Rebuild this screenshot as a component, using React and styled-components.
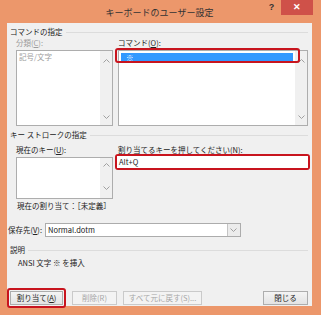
import React from 'react';
import styled, { createGlobalStyle } from 'styled-components';

const GlobalStyle = createGlobalStyle`
  html, body {
    margin: 0;
    padding: 0;
    background: #d9d9d9;
  }
  body {
    font-family: "Noto Sans CJK JP", "Noto Sans", sans-serif;
    font-size: 7.5px;
    color: #222;
  }
`;

const Window = styled.div`
  box-sizing: border-box;
  width: 321px;
  height: 315px;
  background: #ec976b;
  display: flex;
  flex-direction: column;
  padding: 0 9px 9px 7px;
`;

const TitleBar = styled.div`
  height: 23px;
  display: grid;
  grid-template-columns: 1fr auto 1fr;
  align-items: start;
`;

const Title = styled.div`
  grid-column: 2;
  font-size: 9px;
  line-height: 10px;
  margin-top: 8px;
  color: #333;
`;

const Controls = styled.div`
  grid-column: 3;
  justify-self: end;
  display: flex;
  margin-right: -1px;
`;

const Help = styled.div`
  width: 19px;
  height: 15px;
  font: bold 9px/15px "Liberation Sans", sans-serif;
  color: #333;
  text-align: center;
`;

const Close = styled.div`
  width: 32px;
  height: 15px;
  background: #cf5149;
  color: #fff;
  font: bold 9px/15px "Liberation Sans", sans-serif;
  text-align: center;
`;

const Content = styled.div`
  flex: 1;
  background: #f0f0f0;
  display: flex;
  flex-direction: column;
  padding: 0 4px 1px 1px;
`;

const GroupHeader = styled.div`
  display: flex;
  align-items: center;
  gap: 3px;
  height: 10px;
  line-height: 10px;
  margin: ${p => p.$top}px 0 0 2px;
  &::after {
    content: '';
    flex: 1;
    height: 1px;
    background: #dcdcdc;
  }
`;

const Columns = styled.div`
  display: grid;
  grid-template-columns: 97px 190px;
  column-gap: 5px;
  margin: ${p => p.$top}px 0 0 8px;
`;

const Label = styled.div`
  height: 10px;
  line-height: 10px;
  white-space: nowrap;
  color: ${p => (p.$dim ? '#9c9c9c' : '#222')};
  u {
    text-underline-offset: 1px;
  }
`;

const ListBox = styled.div`
  position: relative;
  box-sizing: border-box;
  height: ${p => p.$h}px;
  border: 1px solid #adadad;
  background: #fff;
  display: flex;
`;

const ListItems = styled.div`
  flex: 1;
  padding: 1px 2px;
  line-height: 10px;
  color: ${p => (p.$dim ? '#9c9c9c' : '#222')};
`;

const SelectedRow = styled.div`
  background: #3399ff;
  color: #fff;
  height: 9px;
  line-height: 9px;
  padding-left: 5px;
  margin-top: 1px;
`;

const ScrollBar = styled.div`
  width: 12px;
  background: #f0f0f0;
  display: flex;
  flex-direction: column;
  justify-content: space-between;
  align-items: center;
  padding: ${p => p.$pad};
`;

const RowMark = styled.div`
  position: absolute;
  left: -4px;
  top: -3px;
  width: 185px;
  height: 15px;
  box-sizing: border-box;
  border: 2px solid #c8141e;
  border-radius: 3px;
`;

const RedFrame = styled.div`
  border: 2px solid #c8141e;
  border-radius: 3px;
  margin: ${p => p.$margin};
  padding: ${p => p.$pad || 0};
`;

const KeyInput = styled.div`
  height: 12px;
  background: #fff;
  line-height: 12px;
  padding-left: 2px;
  color: #222;
`;

const Line = styled.div`
  height: 10px;
  line-height: 10px;
  margin: ${p => p.$top}px 0 0 ${p => p.$left}px;
  white-space: nowrap;
`;

const SaveRow = styled.div`
  display: flex;
  align-items: center;
  margin-top: 12px;
  gap: 3px;
`;

const Select = styled.div`
  box-sizing: border-box;
  width: 196px;
  height: 14px;
  border: 1px solid #acacac;
  background: #fff;
  display: flex;
`;

const SelectValue = styled.div`
  flex: 1;
  line-height: 12px;
  padding-left: 2px;
`;

const SelectArrow = styled.div`
  width: 12px;
  border-left: 1px solid #c4c4c4;
  background: #ececec;
  display: flex;
  align-items: center;
  justify-content: center;
`;

const ButtonRow = styled.div`
  margin-top: auto;
  display: flex;
  align-items: center;
  padding-left: 2px;
`;

const Button = styled.button`
  box-sizing: border-box;
  width: ${p => p.$w}px;
  height: 14px;
  margin-left: ${p => p.$gap || 0}px;
  padding: 0;
  font-family: inherit;
  font-size: 7.5px;
  line-height: 12px;
  color: ${p => (p.disabled ? '#a6a6a6' : '#222')};
  border: 1px solid ${p => (p.disabled ? '#cacaca' : '#adadad')};
  background: ${p => (p.disabled ? '#f3f3f3' : 'linear-gradient(#f4f4f4, #e3e3e3)')};
`;

const Spacer = styled.div`
  flex: 1;
`;

const Chevron = ({ up }) => (
  <svg width="7" height="4" viewBox="0 0 7 4">
    <polyline
      points={up ? '0.5,3.5 3.5,0.5 6.5,3.5' : '0.5,0.5 3.5,3.5 6.5,0.5'}
      fill="none"
      stroke="#a0a0a0"
      strokeWidth="1"
    />
  </svg>
);

const Bar = ({ pad }) => (
  <ScrollBar $pad={pad}>
    <Chevron up />
    <Chevron />
  </ScrollBar>
);

export default function App() {
  return (
    <>
      <GlobalStyle />
      <Window>
        <TitleBar>
          <Title>キーボードのユーザー設定</Title>
          <Controls>
            <Help>?</Help>
            <Close>✕</Close>
          </Controls>
        </TitleBar>
        <Content>
          <GroupHeader $top={4}>コマンドの指定</GroupHeader>
          <Columns $top={1}>
            <Label $dim>分類(<u>C</u>):</Label>
            <Label>コマンド(<u>O</u>):</Label>
          </Columns>
          <Columns $top={2}>
            <ListBox $h={76}>
              <ListItems $dim>記号/文字</ListItems>
              <Bar pad="8px 0 6px" />
            </ListBox>
            <ListBox $h={76}>
              <ListItems>
                <SelectedRow>※</SelectedRow>
              </ListItems>
              <Bar pad="8px 0 6px" />
              <RowMark />
            </ListBox>
          </Columns>
          <GroupHeader $top={4}>キー ストロークの指定</GroupHeader>
          <Columns $top={5}>
            <Label>現在のキー(<u>U</u>):</Label>
            <Label>割り当てるキーを押してください(<u>N</u>):</Label>
          </Columns>
          <Columns $top={2}>
            <ListBox $h={42}>
              <ListItems />
              <Bar pad="5px 0 8px" />
            </ListBox>
            <div>
              <RedFrame $margin="-3px -2px 0 -3px">
                <KeyInput>Alt+Q</KeyInput>
              </RedFrame>
            </div>
          </Columns>
          <Line $top={2} $left={9}>現在の割り当て：［未定義］</Line>
          <SaveRow>
            <Label>保存先(<u>V</u>):</Label>
            <Select>
              <SelectValue>Normal.dotm</SelectValue>
              <SelectArrow>
                <Chevron />
              </SelectArrow>
            </Select>
          </SaveRow>
          <GroupHeader $top={8}>説明</GroupHeader>
          <Line $top={3} $left={10}>ANSI 文字 ※ を挿入</Line>
          <ButtonRow>
            <RedFrame $margin="-3px" $pad="1px">
              <Button $w={53}>割り当て(<u>A</u>)</Button>
            </RedFrame>
            <Button $w={45} $gap={9} disabled>削除(R)</Button>
            <Button $w={79} $gap={6} disabled>すべて元に戻す(S)...</Button>
            <Spacer />
            <Button $w={45}>閉じる</Button>
          </ButtonRow>
        </Content>
      </Window>
    </>
  );
}
